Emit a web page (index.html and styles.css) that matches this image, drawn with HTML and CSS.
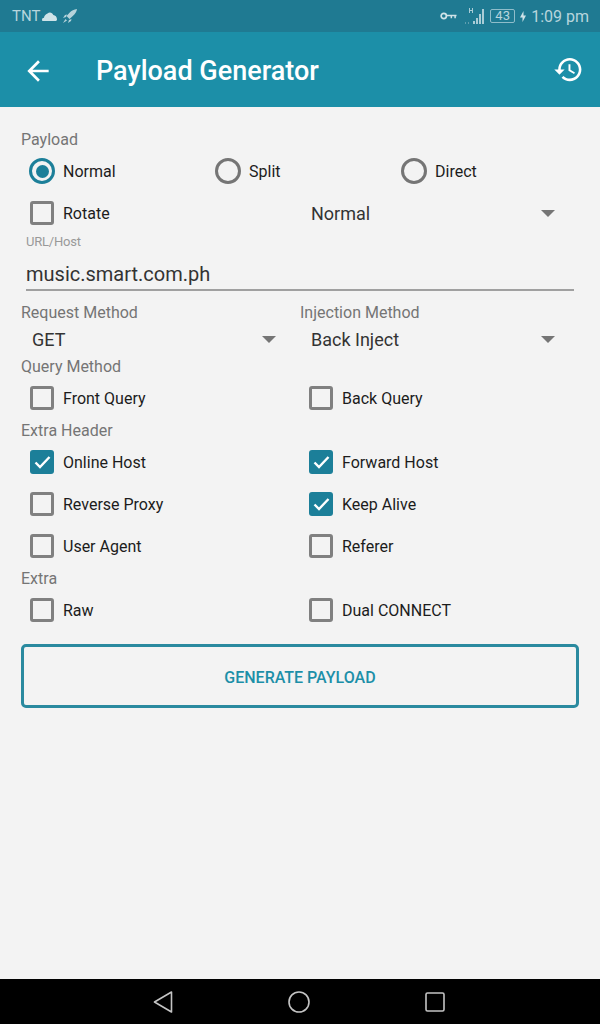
FILE: index.html
```html
<!DOCTYPE html>
<html lang="en">
<head>
    <meta charset="UTF-8">
    <meta name="viewport" content="width=device-width, initial-scale=1.0">
    <title>Payload Generator</title>
    <link rel="stylesheet" href="styles.css">
</head>
<body>
    <!-- Status bar -->
    <div class="status-bar">
        <div class="status-group">
            <span class="carrier">TNT</span>
            <svg class="status-icon" width="15" height="10" viewBox="0 0 15 10"><path fill="#cfe3e8" d="M1 10C.3 10 0 9.4 0 8.7 0 7.6.8 6.8 2 6.7 2.3 4.700 3.500 3 5.500 2.400 7.500.6 10.500 1.500 11.300 4 13.300 4.200 15 6 15 8.200 15 9.400 14.400 10 13.500 10z"/></svg>
            <svg class="status-icon rocket" width="16" height="16" viewBox="0 0 16 16"><path fill="#b5d3db" d="M15 1c-3 .3-5.500 1.500-7.500 3.800L4.500 8l3 3 3.300-3C13.500 5.700 14.700 3.500 15 1z"/><path fill="#b5d3db" d="M4 9l-3 1 2-3 2-.5zM7 12l-1 3 3-2 .5-2zM3.500 11l1.500 1.500L1 15z"/></svg>
        </div>
        <div class="status-group">
            <svg class="status-icon" width="17" height="8" viewBox="0 0 18 8"><circle cx="4" cy="4" r="2.800" fill="none" stroke="#cfe3e8" stroke-width="1.800"/><path fill="none" stroke="#cfe3e8" stroke-width="1.600" d="M7 3.500h10.500M12 3.500v3M16 3.500v3"/></svg>
            <svg class="status-icon signal" width="23" height="17" viewBox="0 0 23 17"><path fill="#a9ccd6" d="M5 0h1v5H5zM8 0h1v5H8zM6 2h2v1H6zM9 13h2v3H9zM12 10h2v6h-2zM15 6h2v10h-2zM18 1h2v15h-2z"/><path fill="#5f9fb0" d="M1 14h1v2H1zM4 14h1v2H4z"/></svg>
            <div class="battery">43</div>
            <svg class="status-icon" width="6" height="11" viewBox="0 0 6 11"><path fill="#cfe3e8" d="M3.500 0v4.500H6L2.500 11V6.500H0z"/></svg>
            <span class="clock">1:09 pm</span>
        </div>
    </div>

    <!-- App bar -->
    <header class="app-bar">
        <svg class="back-icon" width="32" height="32" viewBox="0 0 24 24"><path fill="#fff" d="M20 11H7.830l5.590-5.590L12 4l-8 8 8 8 1.410-1.410L7.830 13H20v-2z"/></svg>
        <h1 class="app-title">Payload Generator</h1>
        <svg class="history-icon" width="31" height="31" viewBox="0 0 24 24"><path fill="#fff" d="M13 3c-4.970 0-9 4.030-9 9H1l3.890 3.890.07.140L9 12H6c0-3.870 3.130-7 7-7s7 3.130 7 7-3.130 7-7 7c-1.930 0-3.680-.79-4.940-2.060l-1.420 1.420C8.270 19.990 10.510 21 13 21c4.970 0 9-4.030 9-9s-4.030-9-9-9zm-1 5v5l4.280 2.540.72-1.210-3.500-2.080V8H12z"/></svg>
    </header>

    <!-- Form -->
    <main class="content">
        <div class="section-label">Payload</div>
        <div class="radio-row">
            <div class="radio-item"><span class="radio selected"><span class="radio-dot"></span></span>Normal</div>
            <div class="radio-item"><span class="radio"></span>Split</div>
            <div class="radio-item"><span class="radio"></span>Direct</div>
        </div>
        <div class="two-col">
            <div class="check-item"><span class="box"></span>Rotate</div>
            <div class="select tall">Normal<span class="arrow"></span></div>
        </div>

        <div class="url-label">URL/Host</div>
        <div class="url-input">music.smart.com.ph</div>

        <div class="two-col methods">
            <div>
                <div class="section-label">Request Method</div>
                <div class="select inset">GET<span class="arrow"></span></div>
            </div>
            <div>
                <div class="section-label">Injection Method</div>
                <div class="select">Back Inject<span class="arrow"></span></div>
            </div>
        </div>

        <div class="section-label">Query Method</div>
        <div class="two-col">
            <div class="check-item"><span class="box"></span>Front Query</div>
            <div class="check-item"><span class="box"></span>Back Query</div>
        </div>

        <div class="section-label">Extra Header</div>
        <div class="two-col">
            <div class="check-item"><span class="box checked"><svg width="24" height="24" viewBox="0 0 24 24"><path fill="none" stroke="#fff" stroke-width="2.400" d="M5.500 12.500l4.500 4.500L19.500 7"/></svg></span>Online Host</div>
            <div class="check-item"><span class="box checked"><svg width="24" height="24" viewBox="0 0 24 24"><path fill="none" stroke="#fff" stroke-width="2.400" d="M5.500 12.500l4.500 4.500L19.500 7"/></svg></span>Forward Host</div>
            <div class="check-item"><span class="box"></span>Reverse Proxy</div>
            <div class="check-item"><span class="box checked"><svg width="24" height="24" viewBox="0 0 24 24"><path fill="none" stroke="#fff" stroke-width="2.400" d="M5.500 12.500l4.500 4.500L19.500 7"/></svg></span>Keep Alive</div>
            <div class="check-item"><span class="box"></span>User Agent</div>
            <div class="check-item"><span class="box"></span>Referer</div>
        </div>

        <div class="section-label">Extra</div>
        <div class="two-col">
            <div class="check-item"><span class="box"></span>Raw</div>
            <div class="check-item"><span class="box"></span>Dual CONNECT</div>
        </div>

        <button class="generate-button">GENERATE PAYLOAD</button>
    </main>

    <!-- Navigation bar -->
    <footer class="nav-bar">
        <svg width="24" height="24" viewBox="0 0 24 24"><path fill="none" stroke="#c4c4c4" stroke-width="1.600" stroke-linejoin="round" d="M20.500 2L3.500 12l17 10z"/></svg>
        <svg width="24" height="24" viewBox="0 0 24 24"><circle cx="12" cy="12" r="10" fill="none" stroke="#c4c4c4" stroke-width="1.600"/></svg>
        <svg width="24" height="24" viewBox="0 0 24 24"><rect x="3" y="3" width="18" height="18" rx="1.500" fill="none" stroke="#c4c4c4" stroke-width="1.600"/></svg>
    </footer>
</body>
</html>
```

FILE: styles.css
```css
/* General Styling */
* {
    box-sizing: border-box;
}

body {
    margin: 0;
    width: 600px;
    height: 1024px;
    display: flex;
    flex-direction: column;
    font-family: Roboto, sans-serif;
    background: #f3f3f3;
    color: #1c1c1c;
}

/* Status bar */
.status-bar {
    height: 32px;
    padding: 0 11px 0 12px;
    display: flex;
    justify-content: space-between;
    align-items: center;
    background: #1f7a92;
    color: #b7d5dd;
    font-size: 15px;
}

.status-group {
    display: flex;
    align-items: center;
}

.status-icon {
    margin-left: 2px;
}

.rocket {
    margin-left: 5px;
}

.signal {
    margin-left: 7px;
}

.battery {
    width: 25px;
    height: 14px;
    margin: 0 3px 0 3px;
    border: 1px solid #8fbdca;
    border-radius: 2px;
    font-size: 13px;
    line-height: 12px;
    text-align: center;
}

.clock {
    margin-left: 5px;
    font-size: 16px;
}

/* App bar */
.app-bar {
    height: 75px;
    padding: 2px 16px 0 22px;
    display: flex;
    align-items: center;
    background: #1c8fa8;
    color: #fff;
}

.app-title {
    flex: 1;
    margin: 0 0 0 42px;
    font-size: 27px;
    font-weight: 500;
}

.history-icon {
    margin-top: -3px;
}

/* Form */
.content {
    flex: 1;
    padding: 21px 21px 0;
}

.section-label {
    height: 22px;
    padding-top: 1px;
    line-height: 22px;
    font-size: 16px;
    color: #757575;
}

.radio-row {
    display: grid;
    grid-template-columns: 186px 186px 186px;
    height: 42px;
}

.radio-item {
    display: flex;
    align-items: center;
    gap: 8px;
    padding-left: 8px;
    font-size: 16px;
}

.radio {
    width: 26px;
    height: 26px;
    display: flex;
    align-items: center;
    justify-content: center;
    border: 3px solid #757575;
    border-radius: 50%;
}

.radio.selected {
    border-color: #1c7f99;
}

.radio-dot {
    width: 13px;
    height: 13px;
    border-radius: 50%;
    background: #1c7f99;
}

.two-col {
    display: grid;
    grid-template-columns: 279px 279px;
}

.check-item {
    height: 42px;
    display: flex;
    align-items: center;
    gap: 9px;
    padding-left: 9px;
    font-size: 16px;
}

.box {
    width: 24px;
    height: 24px;
    border: 3px solid #808080;
    border-radius: 3px;
}

.box.checked {
    border: none;
    background: #1c7f99;
}

.box svg {
    display: block;
}

/* Dropdowns */
.select {
    height: 32px;
    padding-left: 11px;
    padding-right: 24px;
    display: flex;
    justify-content: space-between;
    align-items: center;
    font-size: 18px;
    color: #333;
}

.select.tall {
    height: 42px;
}

.arrow {
    width: 0;
    height: 0;
    border-left: 7px solid transparent;
    border-right: 7px solid transparent;
    border-top: 7px solid #757575;
}

/* URL field */
.url-label {
    height: 16px;
    margin-left: 5px;
    line-height: 16px;
    font-size: 13px;
    letter-spacing: -0.2px;
    color: #999;
}

.url-input {
    height: 41px;
    width: 548px;
    margin-left: 5px;
    padding-top: 11px;
    border-bottom: 2px solid #a0a0a0;
    line-height: 26px;
    font-size: 20px;
    color: #333;
}

.methods {
    margin-top: 10px;
}

/* Button */
.generate-button {
    display: block;
    width: 558px;
    height: 64px;
    margin-top: 13px;
    padding-top: 3px;
    border: 3px solid #2a8a9f;
    border-radius: 5px;
    background: transparent;
    font-family: Roboto, sans-serif;
    font-size: 16px;
    font-weight: 500;
    color: #1c8fa8;
}

/* Navigation bar */
.nav-bar {
    height: 45px;
    padding-left: 151px;
    display: flex;
    align-items: center;
    gap: 112px;
    background: #000;
}
```
